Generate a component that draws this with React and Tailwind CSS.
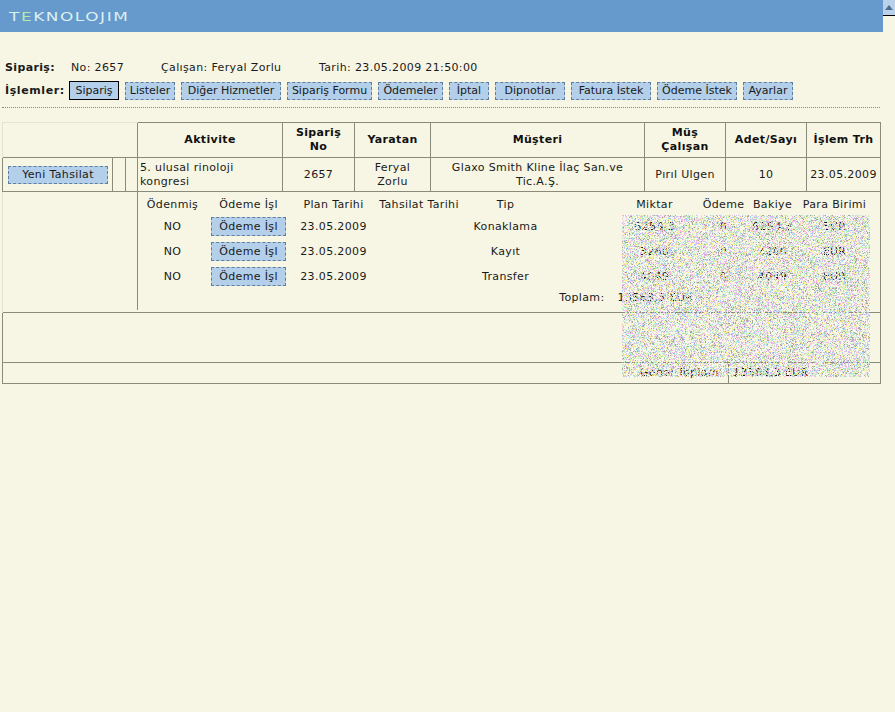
import React from "react";

function Noise() {
  const w = 248, h = 162;
  const colors = ["#f5b8e0", "#b8eeb0", "#f8ee90", "#a8d2f5", "#ffffff", "#dcb8f2", "#a6a696", "#c8ecdc"];
  const paths = colors.map(() => "");
  let s = 12345;
  const rnd = () => { s = (s * 1664525 + 1013904223) >>> 0; return s / 4294967296; };
  for (let y = 0; y < h; y++) for (let x = 0; x < w; x++) {
    if (rnd() < 0.6) {
      const c = Math.floor(rnd() * colors.length);
      paths[c] += `M${x} ${y}h1v1h-1z`;
    }
  }
  return (
    <svg width={w} height={h} className="absolute left-[622px] top-[215px]">
      {paths.map((d, i) => <path key={i} d={d} fill={colors[i]} />)}
    </svg>
  );
}

function Btn({ w, children, active }) {
  return (
    <div className={active
      ? `${w} h-[19px] pt-px tracking-[0px] flex items-center justify-center bg-[#b3cfe9] border border-solid border-black text-[#1a1a1a]`
      : `${w} h-[18px] pt-px tracking-[0px] flex items-center justify-center bg-[#b3cfe9] border border-dashed border-[#5f7f9f] text-[#1a1a1a]`}>
      {children}
    </div>
  );
}

const Th = ({ children, className = "" }) => (
  <th className={`border border-[#8b8b7c] font-bold text-center align-middle leading-[14px] text-[#111] ${className}`}>{children}</th>
);
const Td = ({ children, className = "" }) => (
  <td className={`border border-[#8b8b7c] text-center align-middle leading-[14px] ${className}`}>{children}</td>
);

const rows = [["Konaklama", "6254,3", "0", "6254,3", "EUR"], ["Kayıt", "3260", "0", "3260", "EUR"], ["Transfer", "4049", "0", "4049", "EUR"]];

export default function App() {
  return (
    <div className="relative w-[895px] h-[712px] overflow-hidden bg-[#f7f6e4] text-[11px] tracking-[0.36px] leading-[14px] text-[#1a1a1a] [font-family:DejaVu_Sans,sans-serif]">
      <div className="flex">
        <div className="w-[883px] h-8 bg-[#6699cc] flex items-center pl-[9px]">
          <span className="text-[13px] tracking-[1.2px] scale-x-[1.3] origin-left text-[#dcf0f2] leading-none"><span>T</span><span className="text-[#b8e8a8]">E</span>KNOLOJIM</span>
        </div>
        <div className="w-3 h-[16px] bg-[#b9d2ea] border-b border-black flex items-center justify-center">
          <svg width="8" height="5" viewBox="0 0 8 5"><path d="M0 5L4 0L8 5z" fill="#4d6f8f" /></svg>
        </div>
      </div>

      <div className="flex items-center h-[14px] mt-[29px] pl-[5px]">
        <b className="w-[66px]">Sipariş:</b>
        <span className="w-[90px]">No: 2657</span>
        <span className="w-[158px]">Çalışan: Feryal Zorlu</span>
        <span>Tarih: 23.05.2009 21:50:00</span>
      </div>

      <div className="flex items-center gap-[6px] mt-[6px] pl-[5px] h-[19px]">
        <b className="w-[58px] whitespace-nowrap tracking-[0.6px]">İşlemler:</b>
        <Btn w="w-[50px]" active>Sipariş</Btn>
        <Btn w="w-[50px]">Listeler</Btn>
        <Btn w="w-[100px]">Diğer Hizmetler</Btn>
        <Btn w="w-[85px]">Sipariş Formu</Btn>
        <Btn w="w-[65px]">Ödemeler</Btn>
        <Btn w="w-[40px]">İptal</Btn>
        <Btn w="w-[70px]">Dipnotlar</Btn>
        <Btn w="w-[80px]">Fatura İstek</Btn>
        <Btn w="w-[80px]">Ödeme İstek</Btn>
        <Btn w="w-[50px]">Ayarlar</Btn>
      </div>

      <div className="ml-[2px] w-[878px] mt-[7px] border-t border-dotted border-[#8b8b7c]" />

      <table className="ml-[2px] mt-[14px] w-[878px] table-fixed border-collapse">
        <colgroup>
          <col className="w-[110px]" /><col className="w-[13px]" /><col className="w-[12px]" />
          <col className="w-[145px]" /><col className="w-[72px]" /><col className="w-[76px]" />
          <col className="w-[214px]" /><col className="w-[81px]" /><col className="w-[81px]" /><col className="w-[74px]" />
        </colgroup>
        <tbody>
          <tr className="h-[35px]">
            <td colSpan={3} className="border-t border-l border-[#e4e4d4]" />
            <Th>Aktivite</Th>
            <Th>Sipariş<br />No</Th>
            <Th>Yaratan</Th>
            <Th>Müşteri</Th>
            <Th>Müş<br />Çalışan</Th>
            <Th>Adet/Sayı</Th>
            <Th className="whitespace-nowrap">İşlem Trh</Th>
          </tr>
          <tr className="h-[34px]">
            <Td className="px-[5px]"><div className="h-[18px] w-[100px] flex items-center justify-center bg-[#b3cfe9] border border-dashed border-[#5f7f9f]">Yeni Tahsilat</div></Td>
            <Td /><Td />
            <Td className="!text-left pl-[2px]">5. ulusal rinoloji<br />kongresi</Td>
            <Td>2657</Td>
            <Td>Feryal<br />Zorlu</Td>
            <Td>Glaxo Smith Kline İlaç San.ve<br />Tic.A.Ş.</Td>
            <Td>Pırıl Ulgen</Td>
            <Td>10</Td>
            <Td className="whitespace-nowrap">23.05.2009</Td>
          </tr>
          <tr className="h-[121px]">
            <td colSpan={3} className="border-l border-[#e4e4d4]" />
            <td colSpan={7} className="align-top p-0 border-r border-[#8b8b7c]">
              <div className="h-[118px] border-l border-[#8b8b7c] -ml-px">
                <table className="table-fixed border-collapse w-[734px]">
                  <colgroup>
                    <col className="w-[70px]" /><col className="w-[82px]" /><col className="w-[88px]" /><col className="w-[83px]" />
                    <col className="w-[90px]" /><col className="w-[59px]" /><col className="w-[90px]" /><col className="w-[48px]" /><col className="w-[50px]" /><col className="w-[74px]" />
                  </colgroup>
                  <tbody className="text-center">
                    <tr className="h-[22px]">
                      <td className="pt-[3px]">Ödenmiş</td><td className="pt-[3px]">Ödeme İşl</td><td className="pt-[3px]">Plan Tarihi</td><td className="pt-[3px] whitespace-nowrap">Tahsilat Tarihi</td><td className="pt-[3px]">Tip</td><td /><td className="pt-[3px]">Miktar</td><td className="pt-[3px]">Ödeme</td><td className="pt-[3px]">Bakiye</td><td className="pt-[3px] whitespace-nowrap">Para Birimi</td>
                    </tr>
                    {rows.map((r) => (
                      <tr key={r[0]} className="h-[25px]">
                        <td>NO</td>
                        <td><div className="mx-auto w-[75px] h-[19px] flex items-center justify-center bg-[#b3cfe9] border border-dashed border-[#5f7f9f]">Ödeme İşl</div></td>
                        <td>23.05.2009</td><td />
                        <td className="whitespace-nowrap">{r[0]}</td><td />
                        <td>{r[1]}</td><td>{r[2]}</td><td>{r[3]}</td><td>{r[4]}</td>
                      </tr>
                    ))}
                    <tr className="h-[18px]">
                      <td colSpan={5} />
                      <td className="text-right pr-[5px] whitespace-nowrap">Toplam:</td>
                      <td colSpan={2} className="text-left pl-[8px] whitespace-nowrap">13563,3 EUR</td>
                      <td colSpan={2} />
                    </tr>
                  </tbody>
                </table>
              </div>
            </td>
          </tr>
          <tr className="h-[50px]"><td colSpan={10} className="border border-[#8b8b7c]" /></tr>
          <tr className="h-[20px]">
            <td colSpan={10} className="border border-[#8b8b7c] p-0">
              <div className="flex justify-end items-center h-[20px] pr-[80px]">
                <span className="w-[90px] text-right pr-[5px] whitespace-nowrap">Genel Toplam:</span>
                <span className="border-l border-[#8b8b7c] pl-[4px] w-[72px] h-full flex items-center whitespace-nowrap">13563,3 EUR</span>
              </div>
            </td>
          </tr>
        </tbody>
      </table>
      <Noise />
    </div>
  );
}
